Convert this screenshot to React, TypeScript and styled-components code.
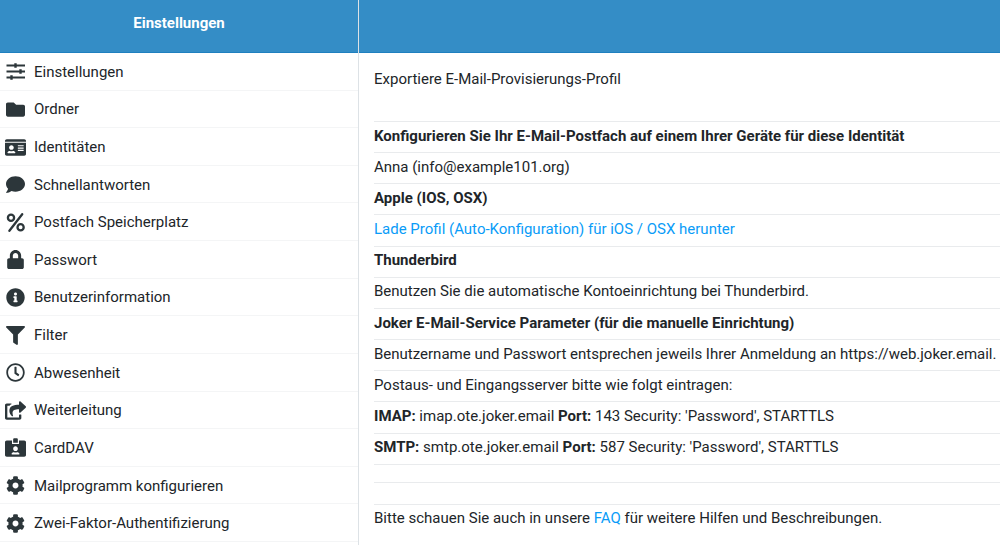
import React from 'react';
import styled, { createGlobalStyle } from 'styled-components';
import { FaFolder, FaIdCard, FaComment, FaLock, FaInfoCircle, FaFilter, FaRegClock, FaShareSquare, FaIdCardAlt, FaCog } from 'react-icons/fa';

const Global = createGlobalStyle`
  * { box-sizing: border-box; }
  body { margin: 0; background: #fff; color: #212529; font: 15px/22px Roboto, "Liberation Sans", sans-serif; }
`;
const Layout = styled.div`display: flex; min-height: 100vh;`;
const Sidebar = styled.aside`flex: 0 0 359px; border-right: 1px solid #dde2e6;`;
const Main = styled.main`flex: 1; min-width: 0;`;
const Header = styled.header`
  height: 53px; display: flex; align-items: center; justify-content: center; padding-bottom: 6px;
  background: #348dc6; border-bottom: 1px solid #1f80bf; color: #fff;
`;
const Title = styled.h1`margin: 0; font-size: 15px; line-height: 22px; font-weight: 700;`;
const List = styled.ul`
  display: grid; grid-auto-rows: 1fr; min-height: 489px;
  list-style: none; margin: 0; padding: 0;
`;
const Item = styled.li`display: grid; border-bottom: 1px solid #f4f5f6;`;
const ItemLink = styled.a`
  display: flex; align-items: center; gap: 8px; padding: 1px 5px 0; color: #212529; text-decoration: none;
  svg { flex: none; width: 21px; height: 19px; color: #2c363a; }
`;
const Intro = styled.p`margin: 0; padding: 15px 15px 31px;`;
const Table = styled.table`width: calc(100% - 15px); height: 414px; margin-left: 15px; border-collapse: collapse;`;
const Cell = styled.td`border-top: 1px solid #e9ebed; padding: 2px 0 5px; white-space: nowrap;`;
const Spacer = styled.td<{ $size: number }>`height: ${p => p.$size}px; padding: 0; border-top: 1px solid #e9ebed;`;
const Link = styled.a`color: #0a9cf8; text-decoration: none;`;

const Sliders = () => (
  <svg viewBox="0 0 21 19" fill="none" stroke="currentColor" aria-hidden="true">
    <path d="M1.500 3.500H20M1.500 9.500H20M1.500 15.500H20" strokeWidth="2" />
    <path d="M10.500 1.200v4.600M15.500 7.200v4.600M6.500 13.200v4.600" strokeWidth="2.400" />
  </svg>
);
const Percent = () => (
  <svg viewBox="0 0 21 19" fill="none" stroke="currentColor" strokeWidth="2.300" aria-hidden="true">
    <circle cx="6" cy="4.800" r="3.100" />
    <circle cx="15.600" cy="14.200" r="3.100" />
    <path d="M17.200 1.200L4.400 17.800" strokeLinecap="round" />
  </svg>
);

const items: [string, React.ComponentType][] = [
  ['Einstellungen', Sliders], ['Ordner', FaFolder], ['Identitäten', FaIdCard], ['Schnellantworten', FaComment],
  ['Postfach Speicherplatz', Percent], ['Passwort', FaLock], ['Benutzerinformation', FaInfoCircle], ['Filter', FaFilter],
  ['Abwesenheit', FaRegClock], ['Weiterleitung', FaShareSquare], ['CardDAV', FaIdCardAlt],
  ['Mailprogramm konfigurieren', FaCog], ['Zwei-Faktor-Authentifizierung', FaCog],
];
const rows: React.ReactNode[] = [
  <b>Konfigurieren Sie Ihr E-Mail-Postfach auf einem Ihrer Geräte für diese Identität</b>,
  'Anna (info@example101.org)', <b>Apple (IOS, OSX)</b>,
  <Link href="#profil">Lade Profil (Auto-Konfiguration) für iOS / OSX herunter</Link>,
  <b>Thunderbird</b>, 'Benutzen Sie die automatische Kontoeinrichtung bei Thunderbird.',
  <b>Joker E-Mail-Service Parameter (für die manuelle Einrichtung)</b>,
  'Benutzername und Passwort entsprechen jeweils Ihrer Anmeldung an https://web.joker.email.',
  'Postaus- und Eingangsserver bitte wie folgt eintragen:',
  <><b>IMAP:</b> imap.ote.joker.email <b>Port:</b> 143 Security: 'Password', STARTTLS</>,
  <><b>SMTP:</b> smtp.ote.joker.email <b>Port:</b> 587 Security: 'Password', STARTTLS</>,
];

export default function App() {
  return <><Global /><Layout>
    <Sidebar><Header><Title>Einstellungen</Title></Header>
      <nav><List>{items.map(([label, Icon]) => <Item key={label}><ItemLink href="#"><Icon />{label}</ItemLink></Item>)}</List></nav>
    </Sidebar>
    <Main><Header /><Intro>Exportiere E-Mail-Provisierungs-Profil</Intro>
      <Table><tbody>{rows.map((row, i) => <tr key={i}><Cell>{row}</Cell></tr>)}
        <tr><Spacer $size={18} /></tr><tr><Spacer $size={22} /></tr>
        <tr><Cell>Bitte schauen Sie auch in unsere <Link href="#faq">FAQ</Link> für weitere Hilfen und Beschreibungen.</Cell></tr>
      </tbody></Table>
    </Main>
  </Layout></>;
}
